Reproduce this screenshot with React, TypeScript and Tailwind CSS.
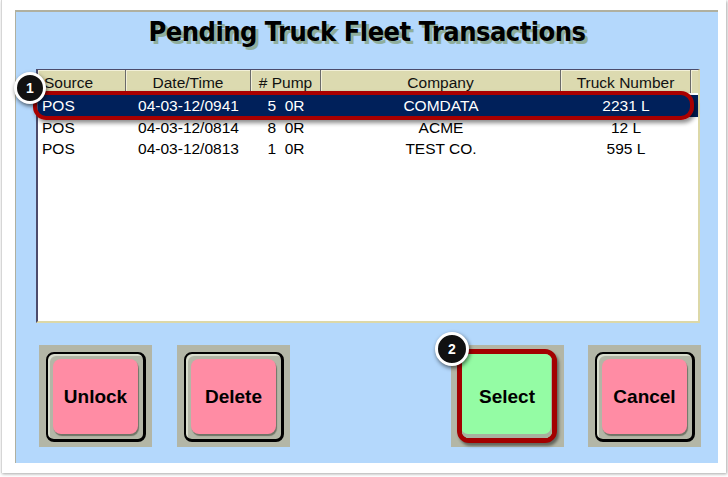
import React from "react";

const cols = [
  { w: "w-[88px]", align: "text-left pl-[4px]", head: "text-left pl-[6px]" },
  { w: "w-[125px]", align: "text-center", head: "text-center" },
  { w: "w-[70px]", align: "text-center", head: "text-center" },
  { w: "w-[240px]", align: "text-center", head: "text-center" },
  { w: "w-[130px]", align: "text-center", head: "text-center" },
];

const headers = ["Source", "Date/Time", "# Pump", "Company", "Truck Number"];

const rows = [
  ["POS", "04-03-12/0941", "5  0R", "COMDATA", "2231 L"],
  ["POS", "04-03-12/0814", "8  0R", "ACME", "12 L"],
  ["POS", "04-03-12/0813", "1  0R", "TEST CO.", "595 L"],
];

function Badge({ n, className }: { n: number; className: string }) {
  return (
    <div
      className={
        "absolute flex items-center justify-center rounded-full border-[3px] border-white bg-[#111] text-[14px] font-bold text-white shadow-[1px_2px_4px_rgba(0,0,0,0.6)] " +
        className
      }
      style={{ fontFamily: "'Liberation Sans', Arial, sans-serif" }}
    >
      {n}
    </div>
  );
}

function PadButton({ label, ring }: { label: string; ring?: boolean }) {
  return (
    <div className="h-[102px] w-[113px] bg-[#b3b6a6] pl-[7px] pt-[7px]">
      {ring ? (
        <div className="-ml-[1px] -mt-[3px] h-[94px] w-[100px] rounded-[12px] border-[5px] border-[#a30000] bg-[#b3b6a6] shadow-[2px_3px_3px_rgba(0,0,0,0.45)]">
          <div className="flex h-full w-full items-center justify-center rounded-[7px] bg-[#94fca4] pt-[2px] shadow-[inset_-1px_-4px_0_#a9b09e] text-[19px] font-bold text-black">
            {label}
          </div>
        </div>
      ) : (
        <div className="h-[90px] w-[100px] rounded-[8px] border-l-2 border-t-2 border-r-[3px] border-b-[3px] border-black bg-[#b3b6a6] p-[5px] shadow-[inset_2px_2px_0_#d8dccc]">
          <div className="flex h-full w-full items-center justify-center rounded-[8px] bg-[#ff8ca4] pt-[1px] shadow-[1px_2px_1px_#6f7466] text-[19px] font-bold text-black">
            {label}
          </div>
        </div>
      )}
    </div>
  );
}

export default function App() {
  return (
    <div
      className="relative h-[477px] w-[728px] bg-white"
      style={{ fontFamily: "'Liberation Sans', Arial, sans-serif" }}
    >
      <div className="ml-[1px] h-[473px] w-[725px] border-l border-[#d6d6d6] bg-white pl-[13px] pt-[10px] shadow-[1px_1px_3px_rgba(0,0,0,0.35)]">
        <div className="flex h-[453px] w-[703px] flex-col border-l border-t-2 border-[#b0b0a0] bg-[#b4d8fc]">
          <div className="flex h-[57px] items-start justify-center">
            <h1
              className="text-[27px] font-bold tracking-[-0.5px] text-black [text-shadow:3px_3px_0_#8fae9c]"
              style={{ fontFamily: "'DejaVu Sans Condensed', 'DejaVu Sans', sans-serif" }}
            >
              Pending Truck Fleet Transactions
            </h1>
          </div>

          <div className="ml-[20px] h-[254px] w-[664px] border-l-2 border-t border-b-2 border-r-2 border-l-[#4c4c6c] border-t-[#4c4c6c] border-b-[#dcd8a8] border-r-[#dcd8a8] bg-white text-[15.5px] text-black">
            <div className="flex h-[23px] bg-[#dcdab0] text-[#111]">
              {headers.map((h, i) => (
                <div
                  key={h}
                  className={`${cols[i].w} ${cols[i].head} border-r border-[#6a6a6a] pt-[1px] leading-[23px] shadow-[inset_1px_1px_0_#f2f0d8]`}
                >
                  {h}
                </div>
              ))}
              <div className="w-[7px] shadow-[inset_1px_1px_0_#f2f0d8]" />
            </div>
            <div className="pt-[2px]">
              {rows.map((r, ri) => (
                <div
                  key={ri}
                  className={`flex h-[21.5px] leading-[22px] ${ri === 0 ? "bg-[#00205a] text-white" : ""}`}
                >
                  {r.map((c, ci) => (
                    <div key={ci} className={`${cols[ci].w} ${cols[ci].align} whitespace-pre`}>
                      {c}
                    </div>
                  ))}
                </div>
              ))}
            </div>
          </div>

          <div className="mt-[22px] flex pl-[23px]">
            <PadButton label="Unlock" />
            <div className="ml-[25px]">
              <PadButton label="Delete" />
            </div>
            <div className="ml-[161px]">
              <PadButton label="Select" ring />
            </div>
            <div className="ml-[24px]">
              <PadButton label="Cancel" />
            </div>
          </div>
        </div>
      </div>

      <div className="absolute left-[33px] top-[91px] h-[29px] w-[661px] rounded-[13px] border-4 border-[#a80000] shadow-[2px_3px_4px_rgba(0,0,0,0.45)]" />
      <Badge n={1} className="left-[14px] top-[72px] h-[32px] w-[32px]" />
      <Badge n={2} className="left-[435px] top-[332px] h-[34px] w-[34px]" />
    </div>
  );
}
